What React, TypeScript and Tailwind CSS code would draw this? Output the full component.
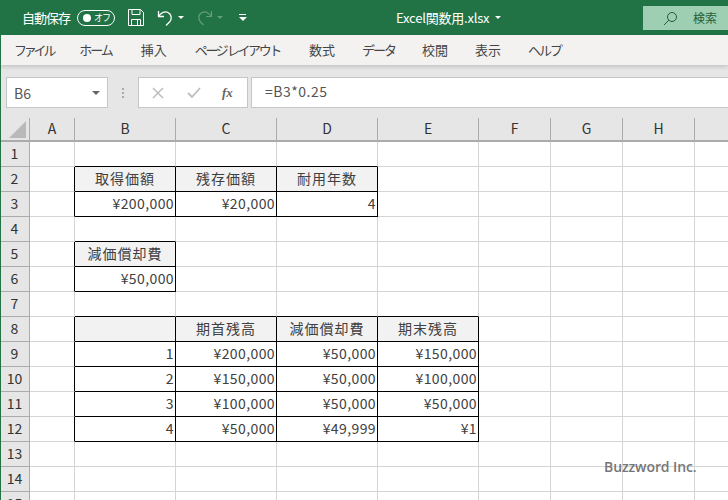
const font = { fontFamily: '"Noto Sans CJK JP", sans-serif' };

const colWidths = [45, 101, 101, 101, 101, 72, 72, 72, 34];
const colNames = ["A", "B", "C", "D", "E", "F", "G", "H", ""];

type Cell = { v: string; head?: boolean };
// key is "row:column", column 1 = B
const cells: Record<string, Cell> = {
  "2:1": { v: "取得価額", head: true },
  "2:2": { v: "残存価額", head: true },
  "2:3": { v: "耐用年数", head: true },
  "3:1": { v: "¥200,000" },
  "3:2": { v: "¥20,000" },
  "3:3": { v: "4" },
  "5:1": { v: "減価償却費", head: true },
  "6:1": { v: "¥50,000" },
  "8:1": { v: "", head: true },
  "8:2": { v: "期首残高", head: true },
  "8:3": { v: "減価償却費", head: true },
  "8:4": { v: "期末残高", head: true },
  "9:1": { v: "1" },
  "9:2": { v: "¥200,000" },
  "9:3": { v: "¥50,000" },
  "9:4": { v: "¥150,000" },
  "10:1": { v: "2" },
  "10:2": { v: "¥150,000" },
  "10:3": { v: "¥50,000" },
  "10:4": { v: "¥100,000" },
  "11:1": { v: "3" },
  "11:2": { v: "¥100,000" },
  "11:3": { v: "¥50,000" },
  "11:4": { v: "¥50,000" },
  "12:1": { v: "4" },
  "12:2": { v: "¥50,000" },
  "12:3": { v: "¥49,999" },
  "12:4": { v: "¥1" },
};

const boxed = (r: number, c: number) => `${r}:${c}` in cells;
const rows = Array.from({ length: 15 }, (_, i) => i + 1);
const tabs = [
  { label: "ファイル", ml: 14, track: -3.2 },
  { label: "ホーム", ml: 26, track: -2 },
  { label: "挿入", ml: 29, track: 0 },
  { label: "ページ レイアウト", ml: 28, track: -2.4 },
  { label: "数式", ml: 29, track: 0 },
  { label: "データ", ml: 27, track: -2 },
  { label: "校閲", ml: 27, track: 0 },
  { label: "表示", ml: 27, track: 0 },
  { label: "ヘルプ", ml: 27, track: -2 },
];

function TitleBar() {
  return (
    <div className="h-[35px] bg-[#217346] flex items-center text-white text-[13px] shrink-0">
      <span className="ml-[22px] w-[55px] whitespace-nowrap tracking-[-1px]">自動保存</span>
      <div className="w-[38px] h-[16px] rounded-full border border-white flex items-center justify-between pl-[5px] pr-[4px]">
        <span className="w-[8px] h-[8px] rounded-full bg-white" />
        <span className="text-[9px] leading-none tracking-[-1px]">オフ</span>
      </div>
      <svg className="ml-[13px]" width="16" height="17" viewBox="0 0 16 17" fill="none" stroke="#fff" strokeWidth="1">
        <path d="M.5.5h12l3 3v13H.5zM4 .5v5h8v-5M3.500 16.500v-6h9v6M9.500 10.500v6" />
      </svg>
      <svg className="ml-[13px]" width="16" height="18" viewBox="0 0 16 18" fill="none" stroke="#fff" strokeWidth="1.300">
        <path d="M1.500 2v5.500h5.500M1.500 7.500C4 3.500 8 2 11 3.500c4 2 4 7 1.500 9.500l-3.500 3.500" />
      </svg>
      <span className="ml-[5px] w-0 h-0 border-x-[3px] border-x-transparent border-t-[3px] border-t-white" />
      <svg className="ml-[13px] opacity-30" width="16" height="18" viewBox="0 0 16 18" fill="none" stroke="#fff" strokeWidth="1.200">
        <path d="M14.500 2v5.500h-5.500M14.500 7.500C12 3.500 8 2 5 3.500c-4 2-4 7-1.500 9.500l3 3" />
      </svg>
      <span className="ml-[4px] w-0 h-0 border-x-[3px] border-x-transparent border-t-[3px] border-t-white opacity-30" />
      <div className="ml-[16px] w-[7px] flex flex-col items-center gap-[2px]">
        <span className="w-[7px] h-px bg-white" />
        <span className="w-0 h-0 border-x-[4px] border-x-transparent border-t-[4px] border-t-white" />
      </div>
      <div className="ml-[150px] flex items-center w-[110px]">
        <span className="whitespace-nowrap tracking-[-0.2px]">Excel関数用.xlsx</span>
        <span className="ml-[6px] w-0 h-0 border-x-[3px] border-x-transparent border-t-[3px] border-t-white" />
      </div>
      <div className="ml-auto mb-[5px] mt-[6px] w-[85px] h-[24px] bg-[#9fcfb2] flex items-center text-[#1f5f3a]">
        <svg className="ml-[20px]" width="15" height="15" viewBox="0 0 15 15" fill="none" stroke="#1f5f3a" strokeWidth="1">
          <circle cx="9" cy="6" r="4.500" />
          <path d="M5.800 9.200 1 14" />
        </svg>
        <span className="ml-[15px] text-[12px]">検索</span>
      </div>
    </div>
  );
}

function RibbonTabs() {
  return (
    <div className="h-[30px] bg-[#f3f2f1] flex items-center text-[#444] text-[13px] shrink-0 shadow-[0_2px_4px_rgba(0,0,0,0.15)] relative">
      {tabs.map((t) => (
        <span key={t.label} className="whitespace-nowrap" style={{ marginLeft: t.ml, letterSpacing: t.track }}>
          {t.label}
        </span>
      ))}
    </div>
  );
}

function FormulaBar() {
  return (
    <div className="h-[53px] bg-[#e6e6e6] flex items-end pb-[10px] pl-[6px] shrink-0">
      <div className="w-[102px] h-[31px] bg-white border border-[#c6c6c6] flex items-center justify-between pl-[7px] pr-[7px] text-[#555] text-[14px]">
        <span className="pt-[2px]">B6</span>
        <span className="w-0 h-0 border-x-[4px] border-x-transparent border-t-[4px] border-t-[#666]" />
      </div>
      <div className="w-[30px] h-[31px] flex flex-col items-center justify-center gap-[2px]">
        <span className="w-[2px] h-[2px] bg-[#aaa]" />
        <span className="w-[2px] h-[2px] bg-[#aaa]" />
        <span className="w-[2px] h-[2px] bg-[#aaa]" />
      </div>
      <div className="w-[110px] h-[31px] bg-white border border-[#c6c6c6] flex items-center">
        <svg className="ml-[13px]" width="12" height="12" viewBox="0 0 12 12" stroke="#bdbdbd" strokeWidth="1.500" fill="none">
          <path d="M1 1l10 10M11 1 1 11" />
        </svg>
        <svg className="ml-[23px]" width="14" height="12" viewBox="0 0 14 12" stroke="#bdbdbd" strokeWidth="1.800" fill="none">
          <path d="M1 6l4 4 8-9" />
        </svg>
        <span className="ml-[21px] text-[13px] italic font-bold text-[#666]" style={{ fontFamily: '"Liberation Serif", serif' }}>
          fx
        </span>
      </div>
      <div className="ml-[3px] flex-1 h-[31px] bg-white border border-[#c6c6c6] border-r-0 flex items-center pl-[13px] pb-[2px] text-[#555] text-[14px] tracking-[0.5px]">
        =B3*0.25
      </div>
    </div>
  );
}

function ColumnHeader() {
  return (
    <div className="flex h-[24px] shrink-0 bg-[#e6e6e6] border-b-2 border-[#ababab]">
      <div className="w-[30px] shrink-0 relative border-r border-[#ababab]">
        <span className="absolute right-[3px] bottom-[2px] w-0 h-0 border-l-[17px] border-l-transparent border-b-[17px] border-b-[#b9b9b9]" />
      </div>
      {colWidths.map((w, i) => (
        <div
          key={i}
          className="shrink-0 flex items-center justify-center pb-[1px] text-[#333] text-[14px] border-r border-[#ababab]"
          style={{ width: w }}
        >
          {colNames[i]}
        </div>
      ))}
    </div>
  );
}

function Row({ r }: { r: number }) {
  return (
    <div className="flex h-[25px] shrink-0">
      <div className="w-[30px] shrink-0 bg-[#e6e6e6] border-r border-b border-[#ababab] flex items-center justify-center pb-[2px] text-[#333] text-[14px]">
        {r}
      </div>
      {colWidths.map((w, c) => {
        const cell = cells[`${r}:${c}`];
        const rightBlack = boxed(r, c) || boxed(r, c + 1);
        const bottomBlack = boxed(r, c) || boxed(r + 1, c);
        return (
          <div
            key={c}
            className={`shrink-0 flex items-center border-r border-b pb-[2px] text-[14px] text-[#404040] ${
              rightBlack ? "border-r-black" : "border-r-[#d4d4d4]"
            } ${bottomBlack ? "border-b-black" : "border-b-[#d4d4d4]"} ${
              cell?.head ? "bg-[#f2f2f2] justify-center tracking-[1px]" : "justify-end pr-[1px] tracking-[0.4px]"
            }`}
            style={{ width: w }}
          >
            {cell?.v}
          </div>
        );
      })}
    </div>
  );
}

export default function App() {
  return (
    <div className="w-[728px] h-[500px] overflow-hidden bg-white flex flex-col relative" style={font}>
      <TitleBar />
      <RibbonTabs />
      <FormulaBar />
      <ColumnHeader />
      <div className="flex flex-col">
        {rows.map((r) => (
          <Row key={r} r={r} />
        ))}
      </div>
      <span className="absolute left-0 top-[35px] bottom-0 w-px bg-[#217346]" />
      <span className="absolute left-[604px] top-[460px] text-[14px] font-semibold text-[#777] leading-none tracking-[-0.1px]" style={{ fontFamily: '"Open Sans", sans-serif' }}>
        Buzzword Inc.
      </span>
    </div>
  );
}
